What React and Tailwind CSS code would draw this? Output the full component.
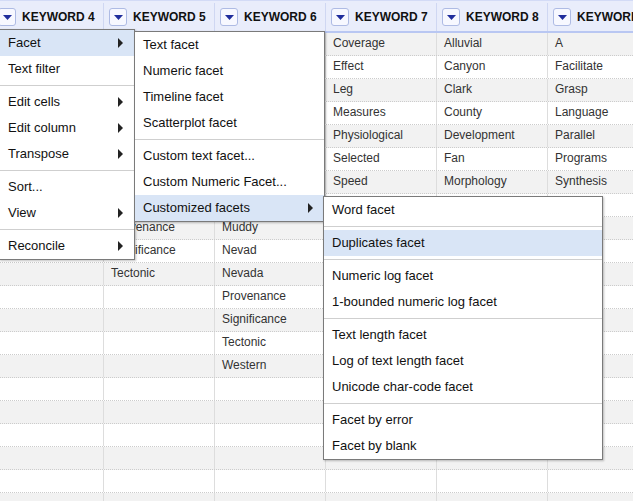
import React from 'react';

const COLS = ['KEYWORD 4', 'KEYWORD 5', 'KEYWORD 6', 'KEYWORD 7', 'KEYWORD 8', 'KEYWORD 9'];

const ROWS = [
  ['', '', '', 'Coverage', 'Alluvial', 'A'],
  ['', '', '', 'Effect', 'Canyon', 'Facilitate'],
  ['', '', '', 'Leg', 'Clark', 'Grasp'],
  ['', '', '', 'Measures', 'County', 'Language'],
  ['', '', '', 'Physiological', 'Development', 'Parallel'],
  ['', '', '', 'Selected', 'Fan', 'Programs'],
  ['', '', '', 'Speed', 'Morphology', 'Synthesis'],
  ['', '', '', '', '', ''],
  ['', 'Provenance', 'Muddy', '', '', ''],
  ['', 'Significance', 'Nevad', '', '', ''],
  ['', 'Tectonic', 'Nevada', '', '', ''],
  ['', '', 'Provenance', '', '', ''],
  ['', '', 'Significance', '', '', ''],
  ['', '', 'Tectonic', '', '', ''],
  ['', '', 'Western', '', '', ''],
  ['', '', '', '', '', ''],
  ['', '', '', '', '', ''],
  ['', '', '', '', '', ''],
  ['', '', '', '', '', ''],
  ['', '', '', '', '', ''],
  ['', '', '', '', '', ''],
];

// menus: null entry = separator
const MENU_MAIN = [
  { label: 'Facet', sub: true, active: true },
  { label: 'Text filter' },
  null,
  { label: 'Edit cells', sub: true },
  { label: 'Edit column', sub: true },
  { label: 'Transpose', sub: true },
  null,
  { label: 'Sort...' },
  { label: 'View', sub: true },
  null,
  { label: 'Reconcile', sub: true },
];

const MENU_FACET = [
  { label: 'Text facet' },
  { label: 'Numeric facet' },
  { label: 'Timeline facet' },
  { label: 'Scatterplot facet' },
  null,
  { label: 'Custom text facet...' },
  { label: 'Custom Numeric Facet...' },
  { label: 'Customized facets', sub: true, active: true },
];

const MENU_CUSTOM = [
  { label: 'Word facet' },
  null,
  { label: 'Duplicates facet', active: true },
  null,
  { label: 'Numeric log facet' },
  { label: '1-bounded numeric log facet' },
  null,
  { label: 'Text length facet' },
  { label: 'Log of text length facet' },
  { label: 'Unicode char-code facet' },
  null,
  { label: 'Facet by error' },
  { label: 'Facet by blank' },
];

function SubArrow() {
  return (
    <svg width="5" height="10" viewBox="0 0 5 10">
      <polygon points="0,0 5,5 0,10" fill="#222" />
    </svg>
  );
}

function DropButton() {
  return (
    <div className="w-[18px] h-[18px] shrink-0 rounded-[3px] border border-[#aebbe4] bg-[#f7f8ff] flex items-center justify-center">
      <svg width="9" height="5" viewBox="0 0 9 5">
        <polygon points="0,0 9,0 4.5,5" fill="#1f2d9c" />
      </svg>
    </div>
  );
}

function Menu({ items, className }) {
  return (
    <div className={`absolute bg-white border border-[#7a7a7a] shadow-[1px_1px_2px_rgba(0,0,0,0.25)] text-[13px] text-[#111] ${className}`}>
      {items.map((it, i) =>
        it === null ? (
          <div key={i} className="my-[3px] h-px bg-[#cfcfcf]" />
        ) : (
          <div
            key={i}
            className={`h-[26px] flex items-center justify-between pl-[8px] pr-[11px] whitespace-nowrap ${it.active ? 'bg-[#d9e5f6]' : ''}`}
          >
            <span>{it.label}</span>
            {it.sub && <SubArrow />}
          </div>
        )
      )}
    </div>
  );
}

export default function App() {
  return (
    <div className="relative w-[633px] h-[501px] overflow-hidden bg-white" style={{ fontFamily: '"Liberation Sans", Arial, sans-serif' }}>
      {/* column headers */}
      <div className="flex ml-[-7px] h-[33px] pt-[2px] bg-[#e9edfb] border-t border-t-[#d3dbf6] border-b-2 border-b-[#b9c7f2]">
        {COLS.map((c) => (
          <div key={c} className="w-[111px] shrink-0 border-r border-[#cfd7f2] flex items-center pl-[5px] gap-[6px]">
            <DropButton />
            <span className="text-[12px] font-bold text-[#111] whitespace-nowrap">{c}</span>
          </div>
        ))}
      </div>

      {/* data rows */}
      <div className="ml-[-7px]">
        {ROWS.map((row, r) => (
          <div
            key={r}
            className={`flex h-[23px] border-b border-dotted border-[#cccccc] ${r % 2 === 0 ? 'bg-[#f2f2f2]' : 'bg-white'}`}
          >
            {row.map((v, c) => (
              <div key={c} className="w-[111px] shrink-0 border-r border-[#dddddd] pl-[7px] text-[12px] leading-[21px] text-[#333] whitespace-nowrap overflow-hidden">
                {v}
              </div>
            ))}
          </div>
        ))}
      </div>

      {/* column menu and its submenus */}
      <Menu items={MENU_MAIN} className="left-[-1px] top-[29px] w-[136px] z-10" />
      <Menu items={MENU_FACET} className="left-[134px] top-[31px] w-[191px] z-20" />
      <Menu items={MENU_CUSTOM} className="left-[323px] top-[196px] w-[280px] z-30" />
    </div>
  );
}
